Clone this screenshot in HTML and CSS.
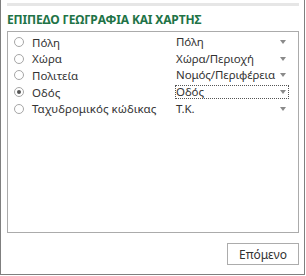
FILE: index.html
```html
<!DOCTYPE html>
<html lang="el">
<head>
<meta charset="utf-8">
<link rel="stylesheet" href="styles.css">
</head>
<body>
<div class="frame">
  <div class="bar"></div>
  <h2 class="title">ΕΠΙΠΕΔΟ ΓΕΩΓΡΑΦΙΑ ΚΑΙ ΧΑΡΤΗΣ</h2>
  <div class="box">
    <div class="row">
      <label class="opt"><span class="radio"></span><span>Πόλη</span></label>
      <div class="select"><span>Πόλη</span><svg class="arrow" width="6" height="4" viewBox="0 0 6 4"><path d="M0 0H6L3 4Z"/></svg></div>
    </div>
    <div class="row">
      <label class="opt"><span class="radio"></span><span>Χώρα</span></label>
      <div class="select"><span>Χώρα/Περιοχή</span><svg class="arrow" width="6" height="4" viewBox="0 0 6 4"><path d="M0 0H6L3 4Z"/></svg></div>
    </div>
    <div class="row">
      <label class="opt"><span class="radio"></span><span>Πολιτεία</span></label>
      <div class="select"><span>Νομός/Περιφέρεια</span><svg class="arrow" width="6" height="4" viewBox="0 0 6 4"><path d="M0 0H6L3 4Z"/></svg></div>
    </div>
    <div class="row">
      <label class="opt"><span class="radio checked"></span><span>Οδός</span></label>
      <div class="select focus"><span>Οδός</span><svg class="arrow" width="6" height="4" viewBox="0 0 6 4"><path d="M0 0H6L3 4Z"/></svg></div>
    </div>
    <div class="row">
      <label class="opt"><span class="radio"></span><span>Ταχυδρομικός κώδικας</span></label>
      <div class="select"><span>Τ.Κ.</span><svg class="arrow" width="6" height="4" viewBox="0 0 6 4"><path d="M0 0H6L3 4Z"/></svg></div>
    </div>
  </div>
  <div class="footer">
    <button class="btn">Επόμενο</button>
  </div>
</div>
</body>
</html>
```
FILE: styles.css
```css
html, body {
  margin: 0;
  padding: 0;
  background: #ffffff;
}
body {
  font-family: "Noto Sans", "Open Sans", sans-serif;
  font-size: 11.5px;
  color: #333333;
}
.frame {
  box-sizing: border-box;
  width: 305px;
  height: 275px;
  border-left: 1px solid #7f7f7f;
  border-right: 1px solid #7f7f7f;
  border-bottom: 1px solid #7f7f7f;
  padding: 3px 6px 0 6px;
  display: flex;
  flex-direction: column;
}
.bar {
  height: 3px;
  background: #e6e6e6;
  width: 292px;
}
.title {
  margin: 7px 0 0 0;
  font-size: 12px;
  line-height: 14px;
  font-weight: 700;
  color: #217346;
  letter-spacing: -0.15px;
  height: 14px;
}
.box {
  box-sizing: border-box;
  margin-top: 4px;
  width: 292px;
  height: 202px;
  border: 1px solid #ababab;
  padding: 2px 0 0 6px;
  display: flex;
  flex-direction: column;
}
.row {
  height: 16.6px;
  display: flex;
  align-items: center;
}
.opt {
  width: 161px;
  display: flex;
  align-items: center;
  gap: 8px;
  white-space: nowrap;
}
.radio {
  box-sizing: border-box;
  width: 10px;
  height: 10px;
  border-radius: 50%;
  border: 1px solid #a6a6a6;
  display: flex;
  align-items: center;
  justify-content: center;
  flex: none;
}
.radio.checked::after {
  content: "";
  width: 4px;
  height: 4px;
  border-radius: 50%;
  background: #555555;
}
.select {
  box-sizing: border-box;
  width: 114px;
  height: 14px;
  border: 1px dotted transparent;
  display: flex;
  align-items: center;
  justify-content: space-between;
  padding: 0 1px 0 0;
  white-space: nowrap;
  line-height: 12px;
  letter-spacing: -0.1px;
}
.select.focus {
  border-color: #555555;
}
.arrow {
  fill: #8a8a8a;
  flex: none;
  margin-right: 1px;
}
.footer {
  display: flex;
  justify-content: flex-end;
  width: 292px;
  margin-top: 10px;
}
.btn {
  box-sizing: border-box;
  width: 72px;
  height: 22px;
  border: 1px solid #acacac;
  background: #ffffff;
  font-family: "Noto Sans", "Open Sans", sans-serif;
  font-size: 12px;
  color: #333333;
  padding: 0;
}
```
